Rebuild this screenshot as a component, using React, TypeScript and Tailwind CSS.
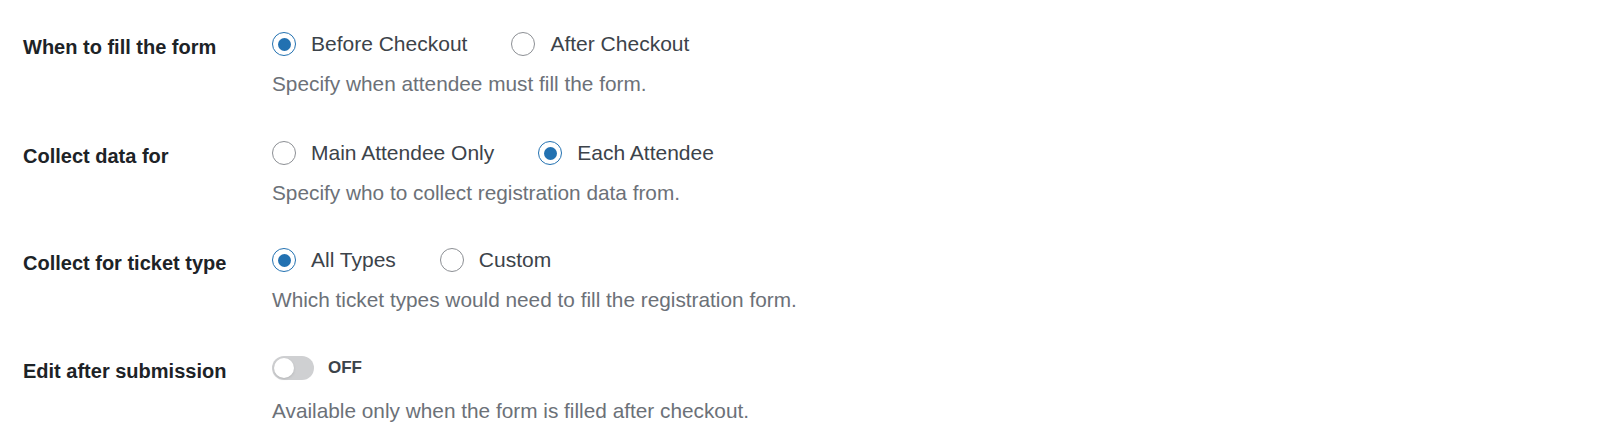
import React from "react";

type Opt = { label: string; checked?: boolean };

function Radio({ label, checked }: Opt) {
  return (
    <label className="flex items-center gap-[15px] cursor-pointer">
      <span
        className={
          checked
            ? "w-[24px] h-[24px] rounded-full border-[1.5px] border-[#2271b1] flex items-center justify-center bg-white"
            : "w-[24px] h-[24px] rounded-full border-[1.5px] border-[#8c8f94] bg-white"
        }
      >
        {checked && <span className="w-[13px] h-[13px] rounded-full bg-[#2271b1]" />}
      </span>
      <span className="text-[21px] leading-[24px] text-[#3c434a]">{label}</span>
    </label>
  );
}

function Row({
  label,
  children,
  desc,
  descGap,
  top,
}: {
  label: string;
  children: React.ReactNode;
  desc: string;
  descGap: string;
  top: string;
}) {
  return (
    <div className={`flex ${top}`}>
      <div className="w-[249px] shrink-0 pt-[3px] text-[20px] leading-[24px] font-semibold text-[#1d2327]">
        {label}
      </div>
      <div className="flex flex-col">
        <div className="flex items-center gap-[44px] h-[24px]">{children}</div>
        <p className={`${descGap} text-[20.8px] leading-[24px] text-[#6c7178]`}>{desc}</p>
      </div>
    </div>
  );
}

export default function App() {
  return (
    <div
      className="w-[1600px] h-[444px] bg-white pl-[23px] pt-[32px] flex flex-col"
      style={{ fontFamily: '"Liberation Sans", Arial, sans-serif' }}
    >
      <Row top="mt-0" label="When to fill the form" desc="Specify when attendee must fill the form." descGap="mt-[16px]">
        <Radio label="Before Checkout" checked />
        <Radio label="After Checkout" />
      </Row>
      <Row top="mt-[45px]" label="Collect data for" desc="Specify who to collect registration data from." descGap="mt-[16px]">
        <Radio label="Main Attendee Only" />
        <Radio label="Each Attendee" checked />
      </Row>
      <Row top="mt-[43px]" label="Collect for ticket type" desc="Which ticket types would need to fill the registration form." descGap="mt-[16px]">
        <Radio label="All Types" checked />
        <Radio label="Custom" />
      </Row>
      <Row top="mt-[44px]" label="Edit after submission" desc="Available only when the form is filled after checkout." descGap="mt-[19px]">
        <div className="flex items-center gap-[14px]">
          <span className="w-[42px] h-[24px] rounded-full bg-[#cfd0d2] flex items-center px-[2px]">
            <span className="w-[20px] h-[20px] rounded-full bg-white shadow-sm" />
          </span>
          <span className="text-[17px] font-semibold text-[#3c434a]">OFF</span>
        </div>
      </Row>
    </div>
  );
}
